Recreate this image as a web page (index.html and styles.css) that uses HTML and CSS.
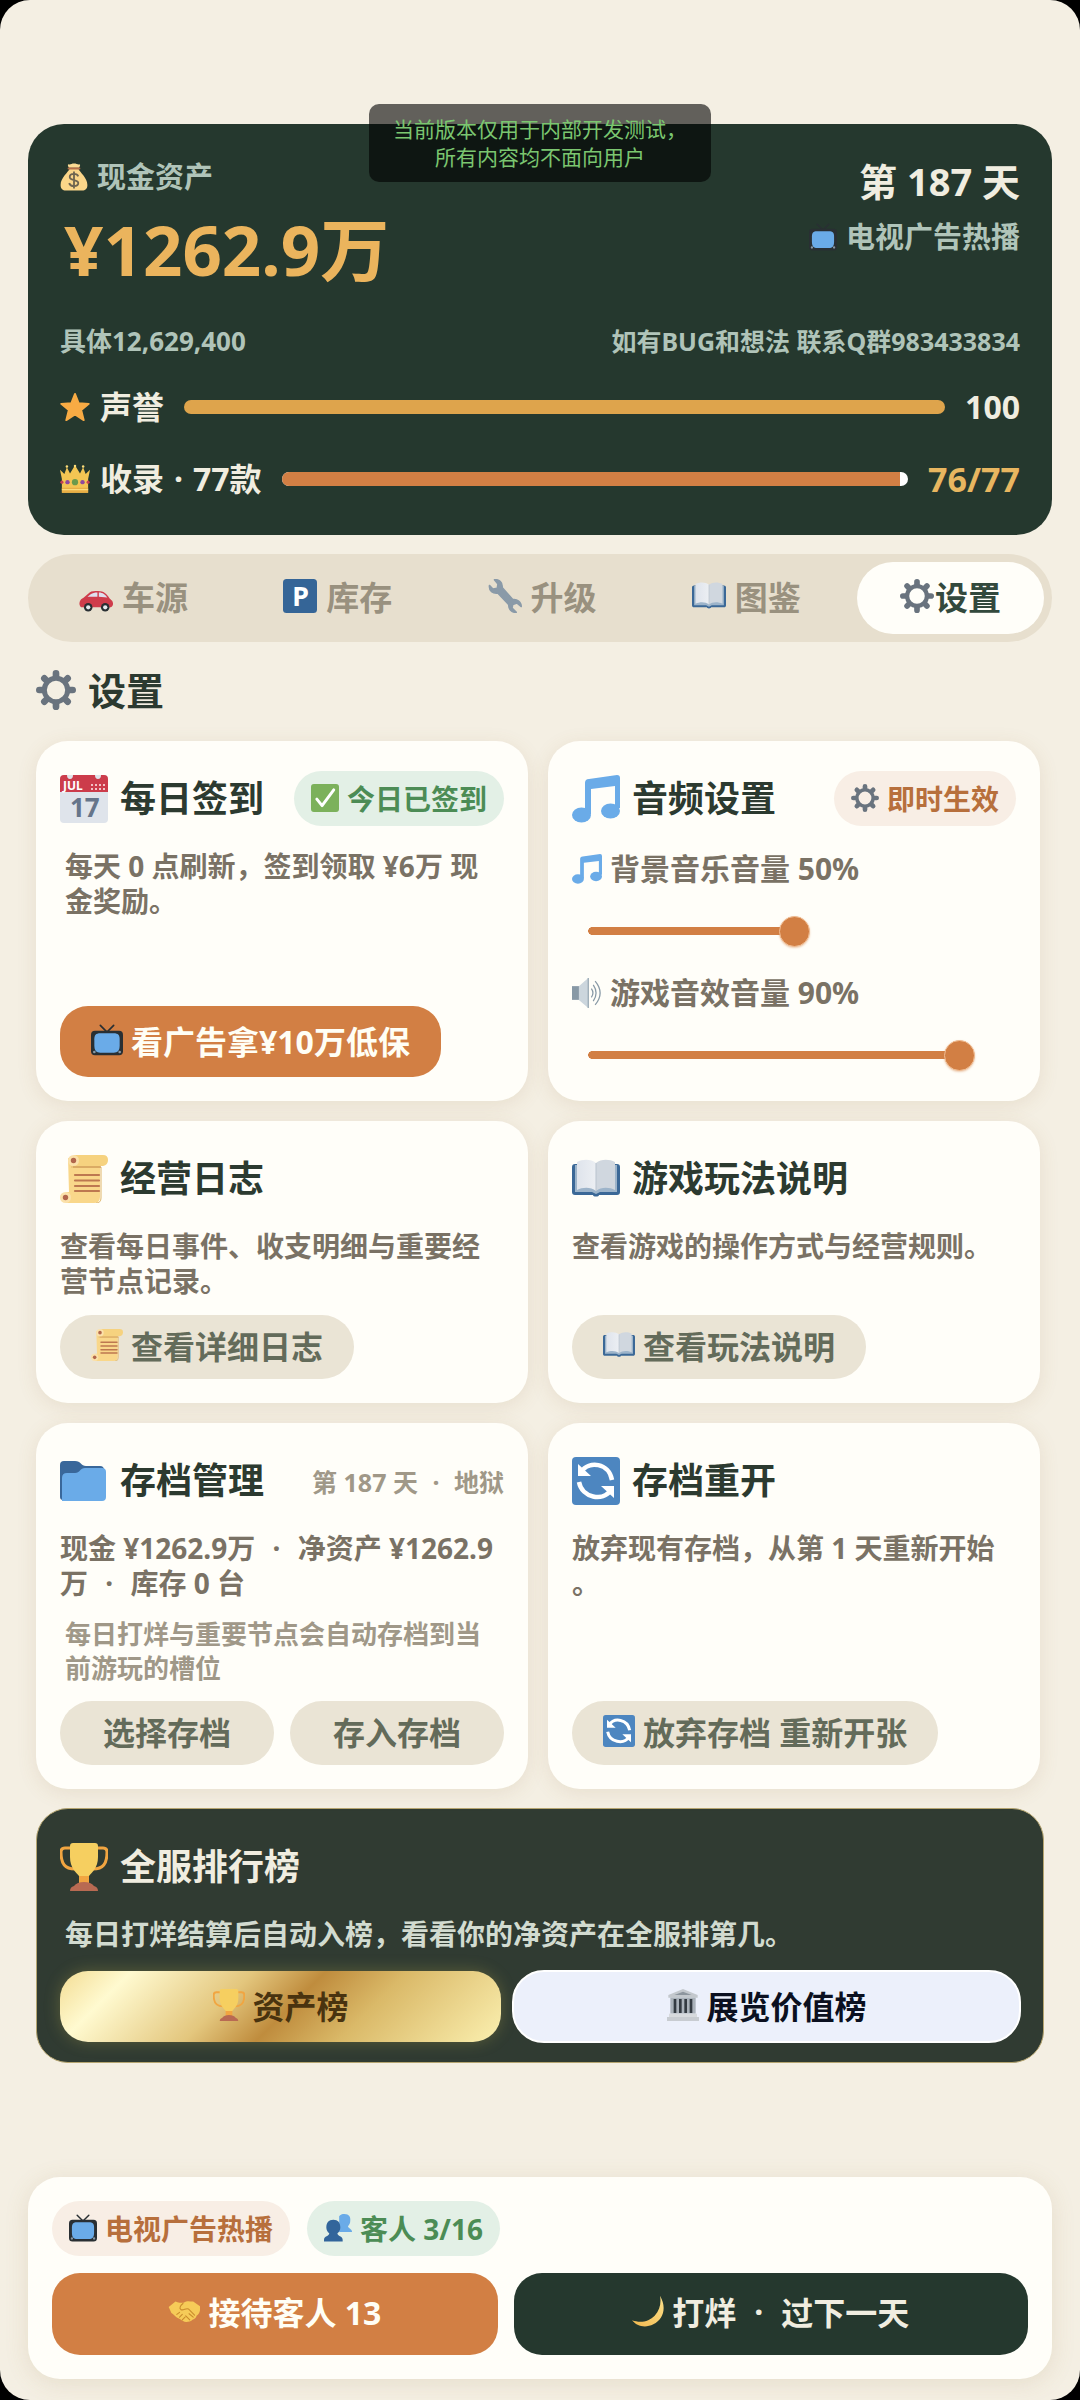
FILE: index.html
```html
<!DOCTYPE html>
<html lang="zh-CN">
<head>
<meta charset="utf-8">
<meta name="viewport" content="width=device-width, initial-scale=1">
<title>设置</title>
<link rel="stylesheet" href="styles.css">
</head>
<body>

<!-- Icon sprite -->
<svg class="sprite" aria-hidden="true">
	<linearGradient id="pageL" x1="0" x2="1"><stop offset="0" stop-color="#dfe4ec"/><stop offset="1" stop-color="#eceff3"/></linearGradient>
	<linearGradient id="moonG" x1="0" x2="1" y1="1" y2="0"><stop offset="0" stop-color="#f3b94f"/><stop offset="1" stop-color="#fbe08a"/></linearGradient>
	<symbol id="i-money" viewBox="1 1 46 46">
		<path d="M16 9c-2-3-3-5-1-6 3 1 5-1 9-1s7 2 9 1c2 1 1 3-1 6z" fill="#fbdc94"/>
		<path d="M17 10h14c3 7 15 15 15 27 0 7-4 9-8 9H10c-4 0-8-2-8-9 0-12 12-20 15-27z" fill="#fbd689"/>
		<path d="M15 10h18" stroke="#b5704a" stroke-width="3" stroke-linecap="round"/>
		<path d="M31 23c-1-3-4-4-7-4-4 0-7 2-7 5 0 7 14 3 14 10 0 4-3 5-7 5s-7-2-8-5M24 15v28" fill="none" stroke="#6e6450" stroke-width="3"/>
	</symbol>
	<symbol id="i-star" viewBox="0 0 48 48">
		<path d="M24 3l6 15 16 1-12 10 4 16-14-9-14 9 4-16L2 19l16-1z" fill="#f8ab44" stroke="#f8ab44" stroke-width="3" stroke-linejoin="round"/>
	</symbol>
	<symbol id="i-crown" viewBox="0 0 48 48">
		<path d="M3 46V24L0 9l7 7 4-11 5 10 8-13 8 13 5-10 4 11 7-7-3 15v22z" fill="#f4c553"/>
		<path d="M3 38h42v8H3z" fill="#e9ae45"/><path d="M3 41h42" stroke="#fbdc7b" stroke-width="2"/>
		<g fill="#fbdc7b"><circle cx="11" cy="4" r="2"/><circle cx="24" cy="3" r="2"/><circle cx="37" cy="4" r="2"/></g>
		<circle cx="24" cy="29" r="5" fill="#6b9a4b"/><circle cx="12" cy="29" r="3.500" fill="#8f4a9e"/><circle cx="36" cy="29" r="3.500" fill="#8f4a9e"/>
		<circle cx="3" cy="29" r="2.500" fill="#c64152"/><circle cx="45" cy="29" r="2.500" fill="#c64152"/>
	</symbol>
	<symbol id="i-tv" viewBox="0 0 48 48">
		<path d="M14 2l10 10L34 2" fill="none" stroke="#292f33" stroke-width="2.500" stroke-linecap="round"/>
		<rect y="10" width="48" height="37" rx="6" fill="#292f33"/>
		<circle cx="5" cy="42" r="2" fill="#8899a6"/><circle cx="43" cy="42" r="2" fill="#8899a6"/>
		<path d="M14 14h20c7 0 9 3 9 9v9c0 8-3 11-9 11H14c-6 0-9-3-9-11v-9c0-6 2-9 9-9z" fill="#6aabe8"/>
	</symbol>
	<symbol id="i-car" viewBox="0 0 48 48">
		<path d="M8 25l7-6c3-2 7-2 12-2 8 0 12 4 16 10l4 4c2 4 1 7-2 9H3c-3-3-3-7-1-10 1-2 4-3 6-5z" fill="#cf3c4b"/>
		<path d="M12 25l5-4c2-1 5-2 9-2v6zM28 19c6 0 9 3 12 7l-12-1z" fill="#dfe0ee"/>
		<circle cx="13" cy="40" r="6" fill="#292f33"/><circle cx="37" cy="40" r="6" fill="#292f33"/>
		<circle cx="13" cy="40" r="3" fill="#e6e9ee"/><circle cx="37" cy="40" r="3" fill="#e6e9ee"/>
	</symbol>
	<symbol id="i-wrench" viewBox="0 0 48 48">
		<path d="M9 1c7-1 12 4 11 11l15 17c6-1 12 3 12 10l-6-5-6 2-1 5 6 6c-7 1-11-5-11-11L14 20C7 21 1 17 2 9l5 5 6-1 1-6z" fill="#8a9aa8" stroke="#8a9aa8" stroke-width="2" stroke-linejoin="round"/>
	</symbol>
	<symbol id="i-book" viewBox="0 0 48 48">
		<path d="M3 9h42c2 0 3 1 3 3v25c0 2-1 3-3 3H27c0 2-6 2-6 0H3c-2 0-3-1-3-3V12c0-2 1-3 3-3z" fill="#3b6897"/>
		<path d="M3 10h42v27H28l-4 2-4-2H3z" fill="#9db4ca"/>
		<path d="M5 7c6-3 14-3 19 1v28c-5-4-13-4-19-1z" fill="url(#pageL)"/>
		<path d="M43 7c-6-3-14-3-19 1v28c5-4 13-4 19-1z" fill="#d0d7df"/>
		<path d="M24 8v28" stroke="#b9c3ce"/>
	</symbol>
	<symbol id="i-gear" viewBox="0 0 48 48">
		<g stroke="#69737e" stroke-width="8" stroke-linecap="round"><path d="M24 4v4M24 40v4M4 24h4M40 24h4M10 10l2 2M36 36l2 2M38 10l-2 2M12 36l-2 2"/></g>
		<circle cx="24" cy="24" r="14" fill="none" stroke="#69737e" stroke-width="6"/>
	</symbol>
	<symbol id="i-check" viewBox="0 0 48 48">
		<rect width="48" height="48" rx="5" fill="#7cb15b"/>
		<path d="M10 26l9 11L39 10" fill="none" stroke="#fff" stroke-width="5" stroke-linecap="round" stroke-linejoin="round"/>
	</symbol>
	<symbol id="i-music" viewBox="0 0 48 48">
		<path d="M13 8q0-4 4-4l28-4q3 0 3 3v30h-5V11L19 14v25h-6z" fill="#6aabe8"/>
		<ellipse cx="9.500" cy="40" rx="9.500" ry="7.500" fill="#6aabe8"/><ellipse cx="38.500" cy="36" rx="9.500" ry="7.500" fill="#6aabe8"/>
	</symbol>
	<symbol id="i-sound" viewBox="0 0 48 48">
		<path d="M0 13h12v22H0z" fill="#8899a6"/><path d="M11 13L26 0h1v48h-1L11 35z" fill="#ccd6dd"/>
		<path d="M26 0v48" stroke="#9aaab4" stroke-width="2"/>
		<path d="M31 17q5 7 0 14M34 11q9 13 0 26M37 5q16 19 0 38" fill="none" stroke="#8899a6" stroke-width="2"/>
	</symbol>
	<symbol id="i-scroll" viewBox="0 0 48 48">
		<path d="M8 3h32v39q0 6-6 6H6V37h3z" fill="#f9d78a"/>
		<path d="M11 12h30v31q0 5-5 5" fill="none" stroke="#dfb66b"/>
		<path d="M14 0h29q5 0 5 5t-5 6H13z" fill="#f6d27f"/><path d="M13 12h28" stroke="#c98f4e"/>
		<circle cx="13.500" cy="5.500" r="5.500" fill="#fbe1ab"/><circle cx="13.500" cy="5.500" r="2.700" fill="#b2674c"/>
		<circle cx="5.500" cy="42.500" r="5.500" fill="#fbe1ab"/><circle cx="5.500" cy="42.500" r="2.700" fill="#b2674c"/>
		<path d="M15 20h24M15 25.500h24M15 31h24M15 36h24" stroke="#bd7850" stroke-width="2.200" stroke-linecap="round"/>
	</symbol>
	<symbol id="i-folder" viewBox="0 0 48 48">
		<path d="M0 8q0-4 4-4h11c6 0 6 5 11 5h14q4 0 4 4v30H3q-3 0-3-3z" fill="#39679a"/>
		<path d="M2 21q0-5 5-5h8c5 0 5-5 10-5h17q4 0 4 4v25q0 4-4 4H2z" fill="#6aabe8"/>
	</symbol>
	<symbol id="i-reload" viewBox="0 0 48 48">
		<rect width="48" height="48" rx="4" fill="#4d86c0"/>
		<path d="M9 15C17 3 37 6 40 23M39 33C31 45 10 41 7 25" fill="none" stroke="#fff" stroke-width="4.500"/>
		<path d="M6 7v12h13zM42 41V29H29z" fill="#fff"/>
	</symbol>
	<symbol id="i-cup" viewBox="0 0 48 48">
		<path d="M12 5H5q-4 0-4 4c0 12 4 17 14 17M36 5h7q4 0 4 4c0 12-4 17-14 17" fill="none" stroke="#f1a541" stroke-width="3"/>
		<path d="M19 28h10v14H19z" fill="#f1a541"/>
		<path d="M10 3q0-3 3-3h22q3 0 3 3v11c0 11-6 15-9 19H19c-3-4-9-8-9-19z" fill="#f6cf60"/>
		<path d="M10 48q0-4 4-5 3-4 10-4t10 4q4 1 4 5z" fill="#b86a52"/>
	</symbol>
	<symbol id="i-bank" viewBox="0 0 48 48">
		<path d="M24 0l22 9v4H2V9z" fill="#c3c8cd"/><path d="M24 4l13 5H11z" fill="#8d969e"/>
		<path d="M5 13h38v24H5z" fill="#aab2ba"/>
		<path d="M12 15v21M20 15v21M28 15v21M36 15v21" stroke="#343b42" stroke-width="4"/>
		<path d="M3 37h42v5H3z" fill="#d7dadd"/><path d="M0 42h48v6H0z" fill="#c8ccd1"/>
	</symbol>
	<symbol id="i-people" viewBox="0 0 48 48">
		<path d="M35 0c8 0 11 5 10 12 0 4-2 7-4 9 1 4 7 5 7 9v1H26V4c2-3 5-4 9-4z" fill="#6aabe8"/>
		<path d="M16 10c8 0 12 5 12 13 0 4-2 8-5 10 0 5 9 5 9 11v3H0v-3c0-6 9-6 9-11-3-2-5-6-5-10 0-8 4-13 12-13z" fill="#32659b"/>
	</symbol>
	<symbol id="i-hands" viewBox="0 2 47 44">
		<path d="M1 18l10-8c4 2 8 2 12 2 6-4 11-1 14-2l10 7c1 6-1 11-5 14-1 4-4 5-6 6-3 3-6 3-9 3-4 0-6-2-9-4C10 33 8 28 5 27z" fill="#f6cb58"/>
		<path d="M22 13c-4 3-6 7-3 9 4 2 7-3 11-1l9 9M31 28l6 5M26 31l6 6M13 29l4-3M17 33l4-4M21 37l4-4" fill="none" stroke="#c98b2c" stroke-width="1.600" stroke-linecap="round"/>
	</symbol>
	<symbol id="i-moon" viewBox="0 0 48 48">
		<path d="M42 1c10 17 6 35-10 43C20 50 7 47 0 38c14 5 26 1 34-7 8-9 10-19 8-30z" fill="url(#moonG)"/>
	</symbol>
</svg>

<div class="screen">
	<p class="notice">当前版本仅用于内部开发测试，<br>所有内容均不面向用户</p>

	<header class="status">
		<div class="status-top">
			<div>
				<div class="status-label"><svg class="icon icon-s"><use href="#i-money"/></svg>现金资产</div>
				<div class="cash">¥1262.9万</div>
			</div>
			<div class="status-day">
				<div class="day">第 187 天</div>
				<div class="status-label"><svg class="icon icon-s"><use href="#i-tv"/></svg>电视广告热播</div>
			</div>
		</div>
		<div class="status-note"><span>具体12,629,400</span><span class="contact">如有BUG和想法 联系Q群983433834</span></div>
		<div class="meter">
			<span class="meter-name"><svg class="icon icon-m"><use href="#i-star"/></svg>声誉</span>
			<div class="track"><div class="fill gold" style="width:100%"></div></div>
			<span>100</span>
		</div>
		<div class="meter">
			<span class="meter-name"><svg class="icon icon-m"><use href="#i-crown"/></svg>收录<span class="dot">·</span>77款</span>
			<div class="track"><div class="fill" style="width:98.7%"></div></div>
			<span class="meter-gold">76/77</span>
		</div>
	</header>

	<nav class="tabs">
		<button class="tab"><svg class="icon"><use href="#i-car"/></svg>车源</button>
		<button class="tab">
			<svg class="icon" viewBox="0 0 48 48">
				<rect width="48" height="48" rx="5" fill="#356597"/>
				<text x="13" y="38" class="icon-p">P</text>
			</svg>库存
		</button>
		<button class="tab"><svg class="icon"><use href="#i-wrench"/></svg>升级</button>
		<button class="tab"><svg class="icon"><use href="#i-book"/></svg>图鉴</button>
		<button class="tab active"><svg class="icon"><use href="#i-gear"/></svg>设置</button>
	</nav>

	<main class="content">
		<h1 class="page-title"><svg class="icon"><use href="#i-gear"/></svg>设置</h1>

		<div class="cards">
			<section class="card">
				<div class="card-head">
					<h2>
						<svg class="icon icon-l" viewBox="0 0 48 48">
							<rect width="48" height="48" rx="4" fill="#dfe4eb"/>
							<path d="M0 17V4q0-4 4-4h3q0 4 3 4t3-4h22q0 4 3 4t3-4h3q4 0 4 4v13z" fill="#cc3c4b"/>
							<text x="3" y="15" class="icon-jul">JUL</text>
							<path d="M31 10h14M31 14h14" stroke="#f2c2c6" stroke-width="2" stroke-dasharray="2 2"/>
							<text x="10" y="42" class="icon-17">17</text>
						</svg>每日签到
					</h2>
					<span class="badge green"><svg class="icon icon-b"><use href="#i-check"/></svg>今日已签到</span>
				</div>
				<p class="desc inset">每天 0 点刷新，签到领取 ¥6万 现金奖励。</p>
				<div class="actions"><button class="btn primary tall"><svg class="icon"><use href="#i-tv"/></svg>看广告拿¥10万低保</button></div>
			</section>

			<section class="card">
				<div class="card-head">
					<h2><svg class="icon icon-l"><use href="#i-music"/></svg>音频设置</h2>
					<span class="badge orange"><svg class="icon icon-b"><use href="#i-gear"/></svg>即时生效</span>
				</div>
				<label class="volume" for="bgm"><svg class="icon icon-m"><use href="#i-music"/></svg>背景音乐音量 50%</label>
				<input class="slider" type="range" id="bgm" min="0" max="100" value="50" style="--val:0.5">
				<label class="volume" for="sfx"><svg class="icon icon-m"><use href="#i-sound"/></svg>游戏音效音量 90%</label>
				<input class="slider" type="range" id="sfx" min="0" max="100" value="90" style="--val:0.9">
			</section>

			<section class="card">
				<div class="card-head"><h2><svg class="icon icon-l"><use href="#i-scroll"/></svg>经营日志</h2></div>
				<p class="desc">查看每日事件、收支明细与重要经营节点记录。</p>
				<div class="actions"><button class="btn"><svg class="icon"><use href="#i-scroll"/></svg>查看详细日志</button></div>
			</section>

			<section class="card">
				<div class="card-head"><h2><svg class="icon icon-l"><use href="#i-book"/></svg>游戏玩法说明</h2></div>
				<p class="desc">查看游戏的操作方式与经营规则。</p>
				<div class="actions"><button class="btn"><svg class="icon"><use href="#i-book"/></svg>查看玩法说明</button></div>
			</section>

			<section class="card">
				<div class="card-head">
					<h2><svg class="icon icon-l"><use href="#i-folder"/></svg>存档管理</h2>
					<span class="slot">第 187 天 <span class="dot">·</span> 地狱</span>
				</div>
				<p class="desc">现金 ¥1262.9万 <span class="dot">·</span> 净资产 ¥1262.9万 <span class="dot">·</span> 库存 0 台</p>
				<p class="hint">每日打烊与重要节点会自动存档到当前游玩的槽位</p>
				<div class="actions pair">
					<button class="btn">选择存档</button>
					<button class="btn">存入存档</button>
				</div>
			</section>

			<section class="card">
				<div class="card-head"><h2><svg class="icon icon-l"><use href="#i-reload"/></svg>存档重开</h2></div>
				<p class="desc">放弃现有存档，从第 1 天重新开始。</p>
				<div class="actions"><button class="btn"><svg class="icon"><use href="#i-reload"/></svg>放弃存档 重新开张</button></div>
			</section>
		</div>

		<section class="card rank">
			<div class="card-head"><h2><svg class="icon icon-l"><use href="#i-cup"/></svg>全服排行榜</h2></div>
			<p class="desc inset">每日打烊结算后自动入榜，看看你的净资产在全服排第几。</p>
			<div class="rank-actions">
				<button class="btn tall shiny"><svg class="icon"><use href="#i-cup"/></svg>资产榜</button>
				<button class="btn tall pale"><svg class="icon"><use href="#i-bank"/></svg>展览价值榜</button>
			</div>
		</section>
	</main>

	<footer class="dock">
		<div class="dock-badges">
			<span class="badge orange"><svg class="icon icon-b"><use href="#i-tv"/></svg>电视广告热播</span>
			<span class="badge green"><svg class="icon icon-b"><use href="#i-people"/></svg>客人 3/16</span>
		</div>
		<div class="dock-actions">
			<button class="btn primary"><svg class="icon"><use href="#i-hands"/></svg>接待客人 13</button>
			<button class="btn dark"><svg class="icon"><use href="#i-moon"/></svg>打烊 <span class="dot">·</span> 过下一天</button>
		</div>
	</footer>
</div>

</body>
</html>
```

FILE: styles.css
```css
* {
	box-sizing: border-box;
}
html {
	background: #000;
}
body {
	margin: 0;
	font-family: "Noto Sans", "Noto Sans CJK SC", sans-serif;
	font-weight: 700;
	color: #2c3a30;
}
h1, h2, p {
	margin: 0;
}
button {
	border: 0;
	padding: 0;
	font: inherit;
	color: inherit;
	background: none;
	cursor: pointer;
}
.sprite {
	position: absolute;
	width: 0;
	height: 0;
}
.screen {
	position: relative;
	display: flex;
	flex-direction: column;
	min-height: 100vh;
	padding: 124px 28px 21px;
	border-radius: 30px;
	background: #f4efe3;
}

/* icons */
.icon {
	flex: none;
	width: 34px;
	height: 34px;
}
.icon-s, .icon-b {
	width: 28px;
	height: 28px;
}
.icon-m {
	width: 30px;
	height: 30px;
}
.icon-l {
	width: 48px;
	height: 48px;
}
.icon-p {
	font-size: 38px;
	fill: #fff;
}
.icon-jul {
	font-size: 12px;
	fill: #fff;
}
.icon-17 {
	font-size: 26px;
	fill: #66758a;
}
.dot {
	margin: 0 10px;
}

.notice {
	position: absolute;
	top: 104px;
	left: 50%;
	transform: translateX(-50%);
	padding: 11px 24px;
	border-radius: 10px;
	background: rgba(0, 0, 0, 0.6);
	color: #7bc670;
	font-size: 21px;
	font-weight: 400;
	line-height: 28px;
	text-align: center;
	white-space: nowrap;
}

/* status header */
.status {
	padding: 33px 32px 36px;
	border-radius: 36px;
	background: #25382e;
	color: #f0ede0;
}
.status-top {
	display: flex;
	justify-content: space-between;
}
.status-label {
	display: flex;
	align-items: center;
	gap: 9px;
	color: #b0c4b9;
	font-size: 29px;
	line-height: 40px;
}
.cash {
	margin-top: 12px;
	padding-left: 4px;
	color: #ebb45d;
	font-size: 69px;
	line-height: 80px;
}
.status-day {
	display: flex;
	flex-direction: column;
	align-items: flex-end;
	gap: 12px;
}
.day {
	font-size: 38px;
	line-height: 48px;
}
.status-note {
	display: flex;
	justify-content: space-between;
	margin-top: 34px;
	color: #b0c4b9;
	font-size: 26px;
	line-height: 36px;
}
.contact {
	font-size: 25px;
}
.meter {
	display: flex;
	align-items: center;
	gap: 20px;
	margin-top: 28px;
	font-size: 32px;
	line-height: 40px;
}
.meter + .meter {
	margin-top: 32px;
}
.meter-name {
	display: flex;
	align-items: center;
}
.meter-name .icon {
	margin-right: 10px;
}
.meter-gold {
	color: #e8b660;
	font-size: 34px;
}
.track {
	flex: 1;
	height: 14px;
	border-radius: 7px;
	background: #fff;
	overflow: hidden;
}
.fill {
	height: 100%;
	background: #d27f44;
}
.fill.gold {
	background: #dea44c;
}

/* tabs */
.tabs {
	display: flex;
	gap: 17px;
	margin-top: 19px;
	padding: 8px 8px 8px 12px;
	border-radius: 44px;
	background: #e7dfce;
}
.tab {
	flex: 1;
	display: flex;
	align-items: center;
	justify-content: center;
	gap: 9px;
	height: 72px;
	padding-bottom: 4px;
	border-radius: 36px;
	color: #99917f;
	font-size: 33px;
}
.tab.active {
	gap: 1px;
	background: #fffef9;
	color: #33493d;
}

/* settings */
.content {
	padding: 0 8px;
}
.page-title {
	display: flex;
	align-items: center;
	gap: 12px;
	margin: 23px 0 26px;
	font-size: 38px;
	line-height: 50px;
}
.page-title .icon {
	width: 40px;
	height: 40px;
}
.cards {
	display: grid;
	grid-template-columns: 1fr 1fr;
	gap: 20px;
	padding-right: 4px;
}
.card {
	display: flex;
	flex-direction: column;
	padding: 30px 24px 24px;
	border-radius: 32px;
	background: #fffef9;
	box-shadow: 0 4px 20px rgba(150, 110, 60, 0.12);
}
.card-head {
	display: flex;
	align-items: center;
	justify-content: space-between;
	height: 55px;
	margin-bottom: 23px;
}
.card-head h2 {
	display: flex;
	align-items: center;
	gap: 12px;
	font-size: 36px;
	line-height: 48px;
}
.badge {
	display: flex;
	align-items: center;
	gap: 8px;
	height: 55px;
	padding: 0 17px 2px;
	border-radius: 28px;
	font-size: 28px;
}
.badge.green {
	background: #e3f0e6;
	color: #4c8c55;
}
.badge.orange {
	background: #f8eee5;
	color: #b76f3c;
}
.slot {
	color: #a09888;
	font-size: 25px;
}
.slot .dot {
	margin: 0 8px;
}
.desc {
	color: #7a7265;
	font-size: 28px;
	line-height: 35px;
	word-break: break-all;
	line-break: anywhere;
}
.inset {
	padding: 0 5px;
}
.hint {
	margin-top: 16px;
	padding: 0 5px;
	color: #a09888;
	font-size: 26px;
	line-height: 34px;
}
.actions {
	display: flex;
	gap: 16px;
	margin-top: auto;
	padding-top: 16px;
}
.pair .btn {
	flex: 1;
}
.btn {
	display: flex;
	align-items: center;
	justify-content: center;
	gap: 8px;
	height: 64px;
	padding: 0 31px 4px;
	border-radius: 32px;
	background: #eae4d5;
	color: #636b5a;
	font-size: 32px;
	white-space: nowrap;
}
.btn .icon {
	width: 32px;
	height: 32px;
}
.btn.tall {
	height: 71px;
}
.btn.primary {
	border-radius: 28px;
	background: #d27f44;
	color: #fffef5;
}
.btn.dark {
	border-radius: 28px;
	background: #25382e;
	color: #f0ede0;
}

/* volume sliders */
.volume {
	display: flex;
	align-items: center;
	gap: 8px;
	color: #7a7265;
	font-size: 30px;
	line-height: 40px;
}
.slider {
	appearance: none;
	-webkit-appearance: none;
	width: 100%;
	height: 44px;
	margin: 20px 0;
	background:
		radial-gradient(circle closest-side, #d27f44 90%, transparent) no-repeat 16px center / 8px 8px,
		linear-gradient(#d27f44, #d27f44) no-repeat 20px center / calc((100% - 32px) * var(--val)) 8px;
}
.slider:last-child {
	margin-bottom: 0;
}
.slider::-webkit-slider-thumb {
	-webkit-appearance: none;
	width: 31px;
	height: 31px;
	border: 1px solid #f0bd93;
	border-radius: 50%;
	background: #d27f44;
	box-shadow: 0 1px 2px rgba(210, 127, 68, 0.4);
}

/* ranking */
.rank {
	margin-top: 19px;
	padding: 30px 22px 19px 23px;
	border: 1px solid #b5a570;
	background: #303b32;
	color: #f0ede0;
	box-shadow: none;
}
.rank .desc {
	color: #d2dbd0;
}
.rank-actions, .dock-actions {
	display: grid;
	grid-template-columns: 13fr 15fr;
	align-items: center;
	gap: 11px;
	margin-top: 18px;
}
.btn.shiny {
	border-radius: 28px;
	background: linear-gradient(135deg, #f3dc93 0%, #fffad0 14%, #e3c67d 38%, #bf8c3d 52%, #dab968 68%, #fbf0b0 100%);
	color: #49330f;
	box-shadow: 0 0 16px rgba(220, 200, 80, 0.25);
}
.btn.pale {
	height: 73px;
	border: 2px solid #fff;
	border-radius: 32px;
	background: #ecf0fb;
	color: #0b1020;
}

/* bottom dock */
.dock {
	margin-top: auto;
	padding: 24px;
	border-radius: 32px;
	background: #fffef9;
	box-shadow: 0 4px 24px rgba(150, 110, 60, 0.14);
}
.dock-badges {
	display: flex;
	gap: 17px;
}
.dock-actions {
	gap: 16px;
	margin-top: 17px;
}
.dock-actions .btn {
	height: 82px;
	padding-bottom: 6px;
}
```
